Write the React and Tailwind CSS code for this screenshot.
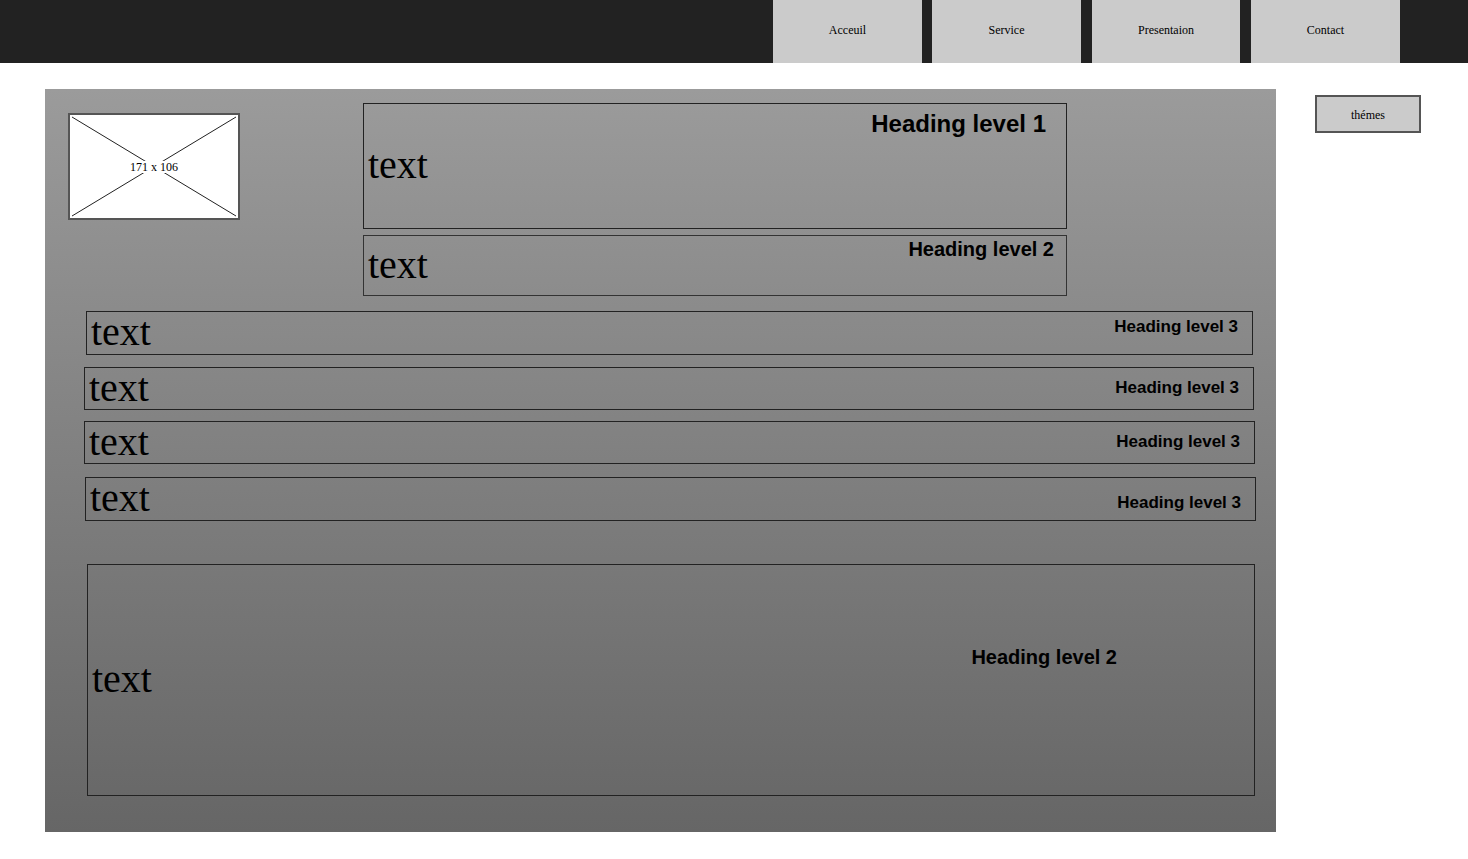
const serif = { fontFamily: '"Liberation Serif", "Times New Roman", serif' };

const Heading = ({ size, className = "", children }) => (
  <div
    className={`font-bold text-black leading-none whitespace-nowrap ${size} ${className}`}
    style={{ fontFamily: '"Liberation Sans", Arial, sans-serif' }}
  >
    {children}
  </div>
);

const BigText = ({ className = "" }) => (
  <div className={`text-[40px] leading-none text-black pl-[4px] pb-[2px] ${className}`} style={serif}>
    text
  </div>
);

const navItems = [
  { label: "Acceuil", cls: "w-[149px]" },
  { label: "Service", cls: "w-[149px] ml-[10px]" },
  { label: "Presentaion", cls: "w-[148px] ml-[11px]" },
  { label: "Contact", cls: "w-[149px] ml-[11px]" },
];

const rows = [
  { cls: "mt-[15px] ml-[41px] w-[1167px] h-[44px]", pt: "pt-[6px]" },
  { cls: "mt-[12px] ml-[39px] w-[1170px] h-[43px]", pt: "pt-[11px]" },
  { cls: "mt-[11px] ml-[39px] w-[1171px] h-[43px]", pt: "pt-[11px]" },
  { cls: "mt-[13px] ml-[40px] w-[1171px] h-[44px]", pt: "pt-[16px]" },
];

export default function App() {
  return (
    <div className="w-[1468px] h-[859px] bg-white overflow-hidden">
      {/* Header */}
      <div className="h-[63px] bg-[#222222] flex justify-end pr-[68px]">
        {navItems.map((item) => (
          <div
            key={item.label}
            className={`${item.cls} h-full bg-[#cbcbcb] flex items-center justify-center text-[12px] text-black pb-[3px]`}
            style={serif}
          >
            {item.label}
          </div>
        ))}
      </div>

      <div className="flex items-start">
        {/* Main panel */}
        <div className="mt-[26px] ml-[45px] w-[1231px] h-[743px] bg-gradient-to-b from-[#9b9b9b] to-[#666666] flex flex-col">
          {/* Top row */}
          <div className="flex items-start">
            <div className="mt-[24px] ml-[23px] w-[172px] h-[107px] bg-white border-2 border-[#555555] grid">
              <svg className="col-start-1 row-start-1 w-full h-full" viewBox="0 0 168 103" preserveAspectRatio="none">
                <line x1="2" y1="2" x2="166" y2="101" stroke="#222" strokeWidth="1" />
                <line x1="166" y1="2" x2="2" y2="101" stroke="#222" strokeWidth="1" />
              </svg>
              <div className="col-start-1 row-start-1 flex items-center justify-center">
                <span className="bg-white px-[3px] text-[12px] leading-none text-black" style={serif}>
                  171 x 106
                </span>
              </div>
            </div>

            <div className="ml-[123px] mt-[14px] flex flex-col">
              <div className="w-[704px] h-[126px] border border-[#222222] flex items-center justify-between">
                <BigText />
                <Heading size="text-[24px]" className="self-start mt-[8px] mr-[20px]">
                  Heading level 1
                </Heading>
              </div>
              <div className="mt-[6px] w-[704px] h-[61px] border border-[#333333] flex items-center justify-between">
                <BigText />
                <Heading size="text-[20px]" className="self-start mt-[3px] mr-[12px]">
                  Heading level 2
                </Heading>
              </div>
            </div>
          </div>

          {/* Level 3 rows */}
          {rows.map((row, i) => (
            <div key={i} className={`${row.cls} border border-[#222222] flex items-center justify-between`}>
              <BigText />
              <Heading size="text-[17px]" className={`self-start ${row.pt} mr-[14px]`}>
                Heading level 3
              </Heading>
            </div>
          ))}

          {/* Big box */}
          <div className="mt-[43px] ml-[42px] w-[1168px] h-[232px] border border-[#222222] flex items-center">
            <BigText />
            <Heading size="text-[20px]" className="self-start mt-[82px] ml-auto mr-[137px]">
              Heading level 2
            </Heading>
          </div>
        </div>

        {/* Themes button */}
        <div
          className="mt-[32px] ml-[39px] w-[106px] h-[38px] bg-[#cbcbcb] border-2 border-[#555555] flex items-center justify-center text-[12px] text-black pt-[2px]"
          style={serif}
        >
          thémes
        </div>
      </div>
    </div>
  );
}
